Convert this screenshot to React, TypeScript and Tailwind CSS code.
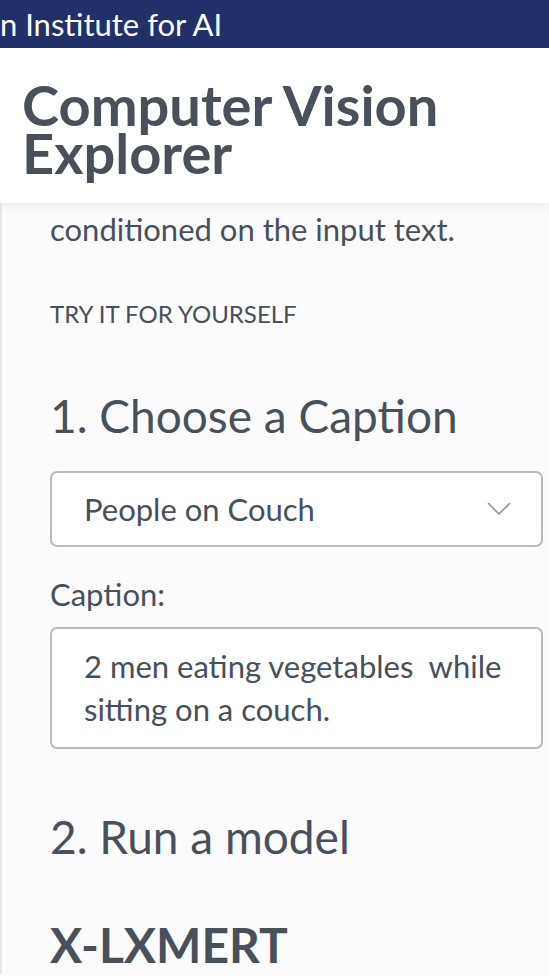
import React from 'react';

const font = { fontFamily: 'Lato, "Noto Sans", sans-serif' };

function ChevronDown() {
    return (
        <svg width="24" height="14" viewBox="0 0 24 14" fill="none" className="shrink-0">
            <path d="M1.5 1.5 L12 12 L22.5 1.5" stroke="#8c929a" strokeWidth="1.6" strokeLinecap="round" strokeLinejoin="round" />
        </svg>
    );
}

export default function App() {
    return (
        <div className="w-[549px] h-[976px] overflow-hidden bg-[#fbfbfc] text-[#47505b]" style={font}>
            {/* top nav */}
            <div className="h-[48px] bg-[#22306a] overflow-hidden flex items-center">
                <span className="ml-[-52px] whitespace-nowrap text-white text-[31px] leading-none">Allen Institute for AI</span>
            </div>

            {/* page header */}
            <div className="relative bg-white pl-[22px] pt-[33px] pb-[26px] shadow-[0_4px_8px_rgba(0,0,0,0.06)]">
                <h1 className="text-[56px] leading-[48px] font-bold text-[#47505b] whitespace-nowrap">
                    Computer Vision
                    <br />
                    Explorer
                </h1>
            </div>

            {/* content */}
            <div className="border-l-2 border-[#e6e8eb] pl-[48px] pr-[6px] pt-[6px]">
                <p className="text-[31px] leading-[40px]">conditioned on the input text.</p>

                <p className="mt-[47px] text-[24px] leading-[36px] uppercase">Try it for yourself</p>

                <h2 className="mt-[56px] text-[46px] leading-[55px]">1. Choose a Caption</h2>

                <div className="mt-[28px] h-[76px] border-2 border-[#b6bbc1] rounded-[7px] bg-white flex items-center justify-between pl-[32px] pr-[30px]">
                    <span className="text-[31px]">People on Couch</span>
                    <ChevronDown />
                </div>

                <p className="mt-[27px] text-[31px] leading-[40px]">Caption:</p>

                <div className="mt-[13px] border-2 border-[#b6bbc1] rounded-[7px] bg-white pl-[32px] pr-[16px] pt-[16px] pb-[16px]">
                    <p className="text-[31px] leading-[43px]">2 men eating vegetables&nbsp; while sitting on a couch.</p>
                </div>

                <h2 className="mt-[60px] text-[46px] leading-[55px]">2. Run a model</h2>

                <h3 className="mt-[52px] text-[48px] leading-[58px] font-bold">X-LXMERT</h3>
            </div>
        </div>
    );
}
